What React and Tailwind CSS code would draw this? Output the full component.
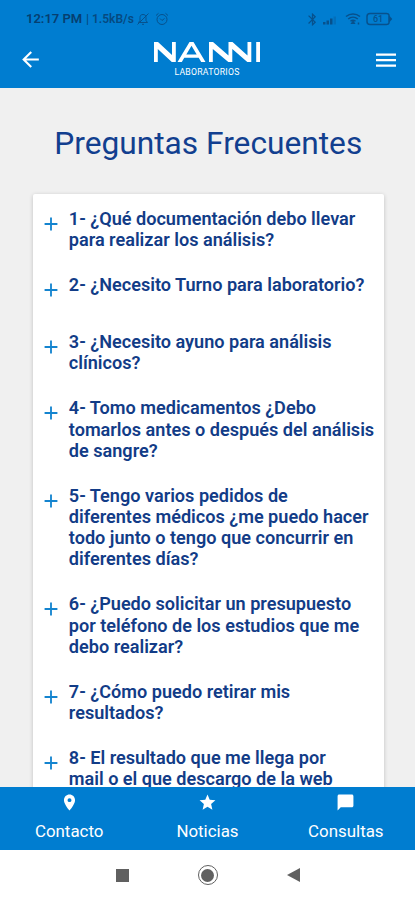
import { MdArrowBack, MdLocationOn, MdStar, MdChatBubble, MdAdd, MdBluetooth } from "react-icons/md"

const questions = [
  "1- ¿Qué documentación debo llevar\npara realizar los análisis?",
  "2- ¿Necesito Turno para laboratorio?",
  "3- ¿Necesito ayuno para análisis\nclínicos?",
  "4- Tomo medicamentos ¿Debo\ntomarlos antes o después del análisis\nde sangre?",
  "5- Tengo varios pedidos de\ndiferentes médicos ¿me puedo hacer\ntodo junto o tengo que concurrir en\ndiferentes días?",
  "6- ¿Puedo solicitar un presupuesto\npor teléfono de los estudios que me\ndebo realizar?",
  "7- ¿Cómo puedo retirar mis\nresultados?",
  "8- El resultado que me llega por\nmail o el que descargo de la web",
];

const tabs = [
  { label: "Contacto", Icon: MdLocationOn },
  { label: "Noticias", Icon: MdStar },
  { label: "Consultas", Icon: MdChatBubble },
];

function StatusBar() {
  return (
    <div className="flex h-[38px] items-center justify-between pl-[26px] pr-[22px] text-[#07518c]">
      <div className="flex items-center whitespace-nowrap">
        <span className="w-[58px] text-[13px] font-semibold text-[#063f70]">12:17 PM</span>
        <span className="w-[52px] pl-[2px] text-[12px] font-semibold text-[#064a80]">| 1.5kB/s</span>
        <svg className="h-[14px] w-[14px]" viewBox="0 0 14 14" fill="none" stroke="currentColor">
          <path d="M2.5 10.5h9L10 8.5V5.5C10 3.5 9 2.5 7 2.5S4 3.5 4 5.5v3zM6 12.3h2M12.5 1.5L1.5 12.5" />
        </svg>
        <svg className="ml-[5px] h-[14px] w-[14px]" viewBox="0 0 14 14" fill="none" stroke="currentColor">
          <circle cx="7" cy="7.5" r="5" />
          <path d="M1 3.5L3.5 1.3M13 3.5L10.5 1.3M5 6.5l2 2 2.5-2" />
        </svg>
      </div>
      <div className="flex items-center">
        <MdBluetooth className="h-[15px] w-[15px]" />
        <svg className="ml-[2px] h-[14px] w-[16px]" viewBox="0 0 16 14" fill="currentColor">
          <path d="M1 10h2.5v2.5H1zM4.500 8.5H7v4H4.500zM8 6.5h2.5v6H8z" />
          <path d="M11.5 4.5H14v8h-2.5z" opacity=".3" />
        </svg>
        <svg className="ml-[7px] h-[14px] w-[16px]" viewBox="0 0 16 14" fill="none" stroke="currentColor" strokeWidth="1.5">
          <path d="M1 4.5C5 1.2 11 1.2 15 4.5M3.2 7c2.8-2.4 6.8-2.4 9.6 0M5.5 9.3c1.5-1.3 3.5-1.3 5 0" />
          <path d="M8 9.5l1.2 1.8H6.8zM13.5 10.5v2" fill="currentColor" />
        </svg>
        <div className="relative ml-[5px] h-[14px] w-[27px]">
          <svg className="h-[14px] w-[27px]" viewBox="0 0 27 14" fill="none" stroke="currentColor" strokeWidth="1.5">
            <path d="M4 1.5h16.5q2 0 2.5 1.5v8q-.5 1.5-2.5 1.5H4q-3 0-3-3v-5q0-3 3-3z" />
            <path d="M23.5 4.2L26 7l-2.5 2.8z" fill="currentColor" strokeWidth=".6" />
          </svg>
          <span className="absolute left-[7px] top-[2px] text-[9px] font-medium leading-[10px]">61</span>
        </div>
      </div>
    </div>
  )
}

function Logo() {
  return (
    <div className="flex flex-col items-center text-white">
      <svg className="h-[20px] w-[106px]" viewBox="0 0 106 20" fill="currentColor">
        <path d="M0 20V0h4l14 13V0h3.8v20h-4L3.8 7v13z" />
        <path d="M23.5 20L35.5 0h4L51.5 20h-4.3l-2.5-4.3H30.3L27.8 20zM32.3 12.4h10.4L37.5 3.8z" />
        <path d="M55 20V0h4l15.5 13.5V0h4L93.5 13.5V0h3.8v20h-4L78.3 7v13h-4L58.8 7v13z" />
        <path d="M102.2 0h3.8v20h-3.8z" />
      </svg>
      <span className="mt-[6px] text-[8.7px] leading-[9px] tracking-[0.25px]">LABORATORIOS</span>
    </div>
  )
}

export default function App() {
  return (
    <div className="flex h-[900px] w-[415px] flex-col overflow-hidden bg-[#f0f0f0] font-[Roboto,sans-serif]">
      <header className="h-[88px] shrink-0 bg-[#007dd0]">
        <StatusBar />
        <div className="grid h-[43px] grid-cols-[25px_1fr_25px] items-center pl-[18px] pr-[19px] text-white">
          <MdArrowBack className="h-[25px] w-[25px]" />
          <Logo />
          <svg className="h-[14px] w-[20px] justify-self-end" viewBox="0 0 20 14" fill="currentColor">
            <path d="M0 .5h20v2.300H0zM0 6h20v2.300H0zM0 11.500h20v2.300H0z" />
          </svg>
        </div>
      </header>

      <main className="min-h-0 flex-1 overflow-hidden pl-[32.5px] pr-[31px]">
        <h1 className="pt-[36px] text-center text-[31.7px] leading-[40px] text-[#123f8f]">Preguntas Frecuentes</h1>
        <ul className="mt-[30px] h-[700px] rounded-[2px] bg-white pl-[7px] pt-[13.7px] shadow-[0_1px_4px_rgba(0,0,0,0.2)]">
          {questions.map((question) => (
            <li key={question} className="mb-[24.2px] flex min-h-[32.8px] items-start">
              <MdAdd className="mt-[5px] h-[22px] w-[22px] shrink-0 text-[#1484cf]" />
              <p className="ml-[7.3px] whitespace-pre text-[18.1px] font-semibold leading-[21.1px] text-[#123c87]">{question}</p>
            </li>
          ))}
        </ul>
      </main>

      <nav className="grid h-[63px] shrink-0 grid-cols-3 bg-[#007dd0] text-white">
        {tabs.map(({ label, Icon }) => (
          <button key={label} className="flex flex-col items-center pt-[6px]">
            <Icon className="h-[19px] w-[19px]" />
            <span className="mt-[9px] text-[16.9px] leading-[20px]">{label}</span>
          </button>
        ))}
      </nav>

      <div className="flex h-[50px] shrink-0 items-center justify-center bg-white text-[#606060]">
        <span className="h-[13px] w-[13px] bg-current"></span>
        <span className="ml-[69px] flex h-[20px] w-[20px] items-center justify-center rounded-full border-[1.5px] border-current">
          <span className="h-[13px] w-[13px] rounded-full bg-current"></span>
        </span>
        <svg className="ml-[69px] h-[14px] w-[13px]" viewBox="0 0 13 14" fill="currentColor">
          <path d="M13 0v14L0 7z" />
        </svg>
      </div>
    </div>
  )
}
